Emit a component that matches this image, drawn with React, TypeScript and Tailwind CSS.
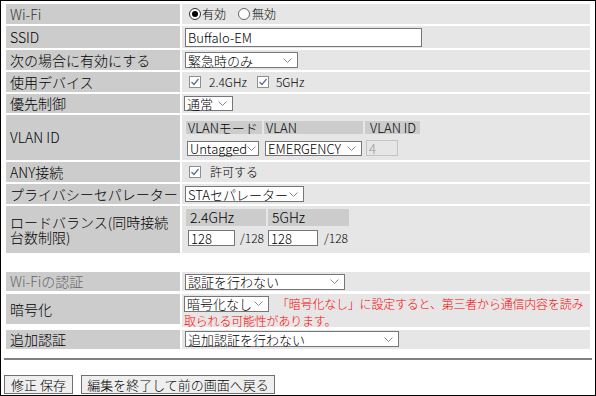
import type { ReactNode } from "react";

function Chevron() {
  return (
    <svg width="9" height="5" viewBox="0 0 9 5" className="shrink-0">
      <polyline points="0.5,0.5 4.5,4.5 8.5,0.5" fill="none" stroke="#8a8a8a" strokeWidth="1" />
    </svg>
  );
}

function Select({ className, children }: { className: string; children: ReactNode }) {
  return (
    <div
      className={`flex shrink-0 items-center justify-between border border-[#767676] bg-white pl-[2px] pr-[5px] text-[13px] leading-[13px] text-black ${className}`}
    >
      <span className="whitespace-nowrap">{children}</span>
      <Chevron />
    </div>
  );
}

function Check() {
  return (
    <svg width="12" height="12" viewBox="0 0 12 12" className="shrink-0">
      <rect x="0.5" y="0.5" width="11" height="11" fill="#fff" stroke="#8f8f8f" />
      <polyline points="2.5,6 5,8.5 9.5,3" fill="none" stroke="#5a6a9a" strokeWidth="1.2" />
    </svg>
  );
}

function Radio({ on }: { on: boolean }) {
  return (
    <svg width="12" height="12" viewBox="0 0 12 12" className="shrink-0">
      <circle cx="6" cy="6" r="5.5" fill="#fff" stroke={on ? "#333" : "#666"} />
      {on && <circle cx="6" cy="6" r="3" fill="#000" />}
    </svg>
  );
}

function Label({ h, children, tone }: { h: string; children: ReactNode; tone?: string }) {
  return (
    <div className={`flex items-center bg-[#cccccc] pl-[4px] text-[14px] leading-[15px] ${tone ?? "text-black"} ${h}`}>
      <span>{children}</span>
    </div>
  );
}

function Value({ children, className }: { children?: ReactNode; className?: string }) {
  return <div className={`bg-[#e6e6e6] ${className ?? "flex items-center pl-[3px]"}`}>{children}</div>;
}

export default function App() {
  return (
    <div className="box-border h-[396px] w-[596px] overflow-hidden border border-black bg-white px-[3px] pt-[3px] font-['Noto_Sans_CJK_JP','Liberation_Sans',sans-serif] font-light text-black">
      <div className="mx-[2px] grid grid-cols-[174px_1fr] gap-[2px]">
        <Label h="h-[20px]" tone="text-[#333]">Wi-Fi</Label>
        <Value className="flex items-center pl-[7px] text-[12px] leading-none">
          <Radio on />
          <span className="ml-[1px]">有効</span>
          <span className="ml-[12px]">
            <Radio on={false} />
          </span>
          <span className="ml-[2px]">無効</span>
        </Value>

        <Label h="h-[22px]">SSID</Label>
        <Value>
          <div className="flex h-[19px] w-[237px] items-center border border-[#767676] bg-white pl-[2px] text-[13px] leading-none">
            Buffalo-EM
          </div>
        </Value>

        <Label h="h-[20px]">次の場合に有効にする</Label>
        <Value>
          <Select className="h-[16px] w-[113px]">緊急時のみ</Select>
        </Value>

        <Label h="h-[20px]">使用デバイス</Label>
        <Value className="flex items-center pl-[7px] text-[12px] leading-none">
          <Check />
          <span className="ml-[8px]">2.4GHz</span>
          <span className="ml-[10px]">
            <Check />
          </span>
          <span className="ml-[7px]">5GHz</span>
        </Value>

        <Label h="h-[19px]">優先制御</Label>
        <Value className="flex items-center pl-[2px]">
          <Select className="h-[15px] w-[49px]">通常</Select>
        </Value>

        <Label h="h-[45px]">VLAN ID</Label>
        <Value className="flex flex-col pl-[4px] pt-[6px]">
          <div className="grid w-max grid-cols-[76px_99px_55px] gap-x-[2px] text-[13px] leading-[13px]">
            <div className="h-[13px] bg-[#cccccc] pl-[2px] whitespace-nowrap">VLANモード</div>
            <div className="h-[13px] bg-[#cccccc] pl-[2px]">VLAN</div>
            <div className="h-[13px] bg-[#cccccc] pl-[5px] whitespace-nowrap">VLAN ID</div>
          </div>
          <div className="mt-[6px] flex items-center">
            <Select className="ml-[1px] h-[15px] w-[72px] text-[11.5px]">Untagged</Select>
            <Select className="ml-[6px] h-[15px] w-[97px] text-[11.5px]">EMERGENCY</Select>
            <div className="ml-[4px] flex h-[16px] w-[32px] items-center border border-[#c4c4c4] pl-[2px] text-[13px] leading-none text-[#9a9a9a]">
              4
            </div>
          </div>
        </Value>

        <Label h="h-[20px]">ANY接続</Label>
        <Value className="flex items-center pl-[7px] text-[12px] leading-none">
          <Check />
          <span className="ml-[9px]">許可する</span>
        </Value>

        <Label h="h-[20px]">プライバシーセパレーター</Label>
        <Value>
          <Select className="h-[16px] w-[119px] text-[12px]">STAセパレーター</Select>
        </Value>

        <Label h="h-[47px]">ロードバランス(同時接続台数制限)</Label>
        <Value className="flex flex-col pl-[4px] pt-[3px]">
          <div className="grid w-max grid-cols-[80px_81px] gap-x-[2px] text-[14px] leading-[17px]">
            <div className="h-[17px] bg-[#cccccc] pl-[4px]">2.4GHz</div>
            <div className="h-[17px] bg-[#cccccc] pl-[4px]">5GHz</div>
          </div>
          <div className="mt-[4px] flex items-end text-[12px] leading-none">
            <div className="ml-[2px] flex h-[16px] w-[47px] items-center border border-[#767676] bg-white pl-[2px] text-[13px]">
              128
            </div>
            <span className="w-[33px] pb-[2px] pl-[5px]">/128</span>
            <div className="flex h-[16px] w-[50px] items-center border border-[#767676] bg-white pl-[2px] text-[13px]">
              128
            </div>
            <span className="pb-[2px] pl-[6px]">/128</span>
          </div>
        </Value>
      </div>

      <div className="mx-[2px] mt-[19px] grid grid-cols-[174px_1fr] gap-x-[2px] gap-y-[3px]">
        <Label h="h-[19px]" tone="text-[#666]">Wi-Fiの認証</Label>
        <Value>
          <Select className="h-[16px] w-[160px]">認証を行わない</Select>
        </Value>

        <Label h="h-[30px]">暗号化</Label>
        <Value className="block pl-[2px] pt-[1px] text-[12px] leading-[13px] tracking-[-0.2px]">
          <span className="inline-block align-middle tracking-normal">
            <Select className="h-[16px] w-[85px]">暗号化なし</Select>
          </span>
          <span className="ml-[8px] align-middle text-[#ff0000]">
            「暗号化なし」に設定すると、第三者から通信内容を読み取られる可能性があります。
          </span>
        </Value>

        <Label h="h-[19px]">追加認証</Label>
        <Value>
          <Select className="h-[16px] w-[214px]">追加認証を行わない</Select>
        </Value>
      </div>

      <div className="mt-[9px] border-t-2 border-[#808080]" />

      <div className="mt-[15px] flex">
        <button
          type="button"
          className="h-[19px] w-[69px] border border-[#707070] bg-[#efefef] text-[13px] leading-none"
        >
          修正 保存
        </button>
        <button
          type="button"
          className="ml-[8px] h-[19px] w-[194px] border border-[#707070] bg-[#efefef] text-[13px] leading-none"
        >
          編集を終了して前の画面へ戻る
        </button>
      </div>
    </div>
  );
}
